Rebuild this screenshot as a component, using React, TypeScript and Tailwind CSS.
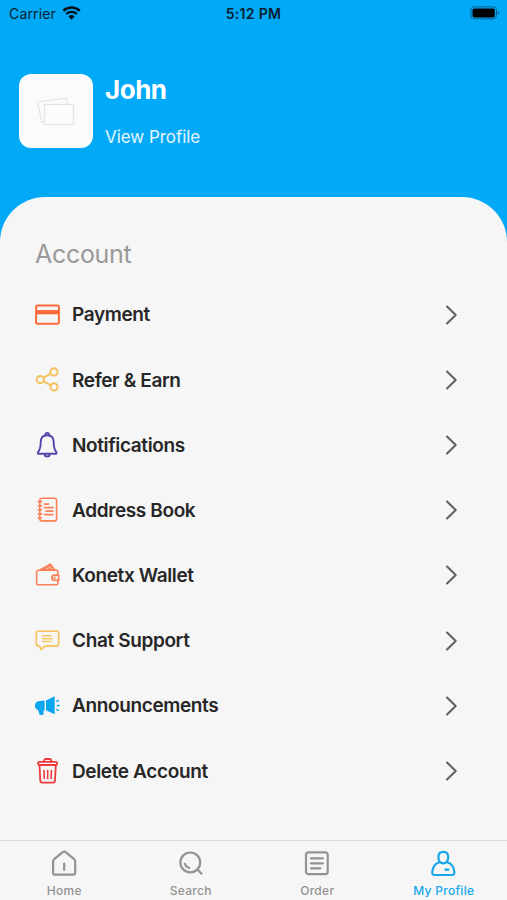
import type { ReactNode } from "react";

interface IconProps {
  color: string;
  width?: number;
  children: ReactNode;
}

function RowIcon({ color, width = 1.9, children }: IconProps) {
  return (
    <svg
      viewBox="0 0 28 28"
      className={`w-7 h-7 shrink-0 ${color}`}
      fill="none"
      stroke="currentColor"
      strokeWidth={width}
      strokeLinecap="round"
      strokeLinejoin="round"
    >
      {children}
    </svg>
  );
}

const MENU_ITEMS = [
  {
    label: "Payment",
    icon: (
      <RowIcon color="text-[#fa6b3a]" width={2}>
        <rect x="3.1" y="4.6" width="22.8" height="18.2" rx="1.4" />
        <path d="M3.5 11.2h22" strokeWidth="4.2" strokeLinecap="butt" />
      </RowIcon>
    ),
  },
  {
    label: "Refer & Earn",
    icon: (
      <RowIcon color="text-[#f4c35c]" width={2}>
        <circle cx="21" cy="5.9" r="3.6" />
        <circle cx="7.3" cy="13.5" r="3.6" />
        <circle cx="21" cy="20.9" r="3.6" />
        <path d="M10.6 11.6l7-3.9M10.6 15.4l7 3.8" />
      </RowIcon>
    ),
  },
  {
    label: "Notifications",
    icon: (
      <RowIcon color="text-[#5447ab]">
        <path d="M14.2 4.2c-4.3 0-6.5 3.1-6.5 7.2 0 5.7-.8 7.3-2.7 9.7v1.6h18.4v-1.6c-1.9-2.4-2.7-4-2.7-9.7 0-4.1-2.2-7.2-6.5-7.2z" />
        <path d="M12.4 4.3V3.7a1.8 1.8 0 0 1 3.6 0v.6M11.7 23.2a2.5 2.3 0 0 0 5 0" />
      </RowIcon>
    ),
  },
  {
    label: "Address Book",
    icon: (
      <RowIcon color="text-[#fa8057]" width={1.6}>
        <rect x="6.8" y="2.2" width="16.8" height="22.7" rx="2.2" />
        <path d="M5.3 5.6h3.4M5.3 9.7h3.4M5.3 13.8h3.4M5.3 17.9h3.4M5.3 22h3.4" />
        <path d="M11.4 8.1h4.2M11.4 11.6h8.6M13 15.1h7M11.4 18.6h8.6" />
      </RowIcon>
    ),
  },
  {
    label: "Konetx Wallet",
    icon: (
      <RowIcon color="text-[#fa8057]" width={1.6}>
        <path d="M24.8 14V10.6a1.3 1.3 0 0 0-1.3-1.3H5.2a1.6 1.6 0 0 0-1.6 1.6v11.3a1.6 1.6 0 0 0 1.6 1.6h18.3a1.3 1.3 0 0 0 1.3-1.3v-3.3" />
        <path d="M7.5 8.8L17.3 3.1 21.7 8.8z" fill="currentColor" fillOpacity="0.55" />
        <path d="M10.5 8.5l6.3-3.3M14.5 8.5l3.6-2" strokeWidth="1" />
        <path d="M25.7 14.1h-4.3a2.6 2.6 0 0 0 0 5.2h4.3z" />
        <circle cx="21.6" cy="16.7" r="0.4" />
      </RowIcon>
    ),
  },
  {
    label: "Chat Support",
    icon: (
      <RowIcon color="text-[#f6c767]" width={1.8}>
        <path d="M5.5 4.1h18a2.2 2.2 0 0 1 2.2 2.2v10.5a2.2 2.2 0 0 1-2.2 2.2H12.3L8 22.6 6.5 19h-1a2.2 2.2 0 0 1-2.2-2.2V6.3a2.2 2.2 0 0 1 2.2-2.2z" />
        <path d="M9.5 8.8h8.6M9.5 11.7h9.7M9.5 14.6h8.6" strokeWidth="1.5" />
      </RowIcon>
    ),
  },
  {
    label: "Announcements",
    icon: (
      <RowIcon color="text-[#0ca5ef]" width={1.5}>
        <path
          d="M11.6 8.6v10H10.5V22a1 1 0 0 1-1 1H7.3a1 1 0 0 1-1-.8L5.3 18C1 17.2.8 10.3 5 9.3z"
          fill="currentColor"
          stroke="none"
        />
        <path d="M13 8.5L21.7 4.3V22.2L13 18.3z" fill="currentColor" stroke="none" />
        <path d="M23.9 9.3l1.3-.8M24.4 13.5h1.8M23.9 17.6l1.3.8" />
      </RowIcon>
    ),
  },
  {
    label: "Delete Account",
    icon: (
      <RowIcon color="text-[#ee3a3c]" width={1.8}>
        <rect x="5.1" y="4.8" width="19.1" height="3.2" rx="1.5" />
        <path d="M11 4.5V4a2 2 0 0 1 2-2h3.3a2 2 0 0 1 2 2v.5" />
        <path d="M6.5 8.2l.8 15.5a2 2 0 0 0 2 1.900h10.700a2 2 0 0 0 2-1.900l.8-15.500" />
        <path d="M11 13.5l.3 8M14.700 13.500v8M18.400 13.500l-.3 8" strokeWidth="1.6" />
      </RowIcon>
    ),
  },
];

const TABS = [
  {
    label: "Home",
    active: false,
    icon: (
      <>
        <path d="M3.1 11.5v11.2a2 2 0 0 0 2 2h18.100a2 2 0 0 0 2-2V11.500a3 3 0 0 0-1.100-2.300l-8.400-7a2.300 2.300 0 0 0-3 0l-8.500 7a3 3 0 0 0-1.100 2.300z" />
        <path d="M14.200 13.500v6.500" />
      </>
    ),
  },
  {
    label: "Search",
    active: false,
    icon: (
      <>
        <circle cx="13.300" cy="12.400" r="9.900" />
        <path d="M20.700 19.800l3.800 3.800M7.900 13.900c.7 2 2.100 3.300 4.300 3.900" />
      </>
    ),
  },
  {
    label: "Order",
    active: false,
    icon: (
      <>
        <rect x="3" y="2.300" width="21.700" height="21.900" rx="2.500" />
        <path d="M7.900 8.300h12M7.900 13.300h12M7.900 18.300h9.500" />
      </>
    ),
  },
  {
    label: "My Profile",
    active: true,
    icon: (
      <>
        <path d="M13.300 1.900c-3 0-4.900 2-4.900 5.200 0 3 1.700 6.300 4.900 6.300s4.900-3.300 4.900-6.300c0-3.200-1.900-5.200-4.900-5.200z" />
        <path d="M9.300 12.300c-4 1.300-6.800 4.900-7.100 10.100-.1 1.500.9 2.600 2.300 2.600h17.600c1.400 0 2.400-1.100 2.300-2.600-.3-5.200-3.100-8.800-7.100-10.100" />
        <path d="M15.400 19.700h3" />
      </>
    ),
  },
];

function StatusBar() {
  return (
    <div className="grid grid-cols-3 items-center h-[26px] pl-[9px] pr-[7px] text-[14px] text-[#06202f]">
      <div className="flex items-center gap-[6px]">
        <span className="tracking-[0.15px]">Carrier</span>
        <svg viewBox="0 0 19 14" className="w-[19px] h-[14px]" fill="none" stroke="#04121b">
          <path d="M1.3 4.8a11.8 11.8 0 0 1 16.4 0" strokeWidth="2.6" />
          <path d="M4.2 8a7.7 7.7 0 0 1 10.6 0" strokeWidth="2.4" />
          <path d="M9.5 13.8L6.4 10.5a4.5 4.5 0 0 1 6.2 0z" fill="#04121b" stroke="none" />
        </svg>
      </div>
      <span className="-ml-[2px] text-center font-semibold tracking-[0.3px]">5:12 PM</span>
      <svg viewBox="0 0 30 14" className="w-[30px] h-[14px] justify-self-end">
        <rect x="0.9" y="0.9" width="25.5" height="12" rx="3" fill="none" stroke="#055f8f" strokeWidth="1" />
        <rect x="2.5" y="2.4" width="22.3" height="9" rx="1.6" fill="#000" />
        <path d="M27.6 4.900c1.800.6 1.800 3.400 0 4z" fill="#055f8f" />
      </svg>
    </div>
  );
}

function ProfileHeader() {
  return (
    <div className="flex gap-[12px] pl-[19px] pt-[48px] h-[170.5px]">
      <div className="w-[74px] h-[74px] rounded-[12px] bg-[#fbfbfc] flex items-center justify-center">
        <svg viewBox="0 0 40 32" className="w-10 h-8" fill="#fcfcfc" stroke="#e3e4e5" strokeWidth="1.2">
          <path d="M1.7 7.2L30.3 3.2 34 24 5.7 27.2z" />
          <rect x="8.5" y="9.5" width="29" height="20" />
        </svg>
      </div>
      <div className="flex flex-col text-white">
        <h1 className="text-[26px] leading-8 font-bold tracking-[-0.5px]">John</h1>
        <p className="mt-[19px] text-[17px] leading-6 tracking-[-0.05px] text-[#e3f7ff]">View Profile</p>
      </div>
    </div>
  );
}

export default function App() {
  return (
    <div className="w-full h-[900px] flex flex-col overflow-hidden bg-[#02a9f7] font-['Inter','Liberation_Sans',sans-serif]">
      <StatusBar />
      <ProfileHeader />

      <main className="flex-1 rounded-t-[45px] bg-[#f6f6f6] px-[33px] pt-[41.5px]">
        <h2 className="pl-[2px] text-[25px] leading-8 tracking-[-0.3px] text-[#999999]">Account</h2>
        <ul className="mt-[12px]">
          {MENU_ITEMS.map(({ label, icon }) => (
            <li key={label} className="flex items-center h-[65.2px]">
              {icon}
              <span className="ml-[11px] pt-[2px] flex-1 text-[19px] font-semibold tracking-[-0.37px] text-[#272727]">
                {label}
              </span>
              <svg
                viewBox="0 0 14 22"
                className="w-[14px] h-[22px] mr-[16px]"
                fill="none"
                stroke="#626262"
                strokeWidth="2.1"
                strokeLinecap="round"
                strokeLinejoin="round"
              >
                <path d="M3 2.5l8.700 8.500-8.700 8.500" />
              </svg>
            </li>
          ))}
        </ul>
      </main>

      <nav className="grid grid-cols-4 h-[60px] shrink-0 pl-px bg-[#f6f6f6] border-t border-[#dadada]">
        {TABS.map(({ label, icon, active }) => (
          <div
            key={label}
            className={`flex flex-col items-center pt-[9px] ${active ? "text-[#18a6e9]" : "text-[#939393]"}`}
          >
            <svg
              viewBox="0 0 28 28"
              className="w-7 h-7"
              fill="none"
              stroke="currentColor"
              strokeWidth="2.2"
              strokeLinecap="round"
              strokeLinejoin="round"
            >
              {icon}
            </svg>
            <span className="mt-[5px] text-[12px] leading-4 font-medium tracking-[0.3px]">{label}</span>
          </div>
        ))}
      </nav>
    </div>
  );
}
